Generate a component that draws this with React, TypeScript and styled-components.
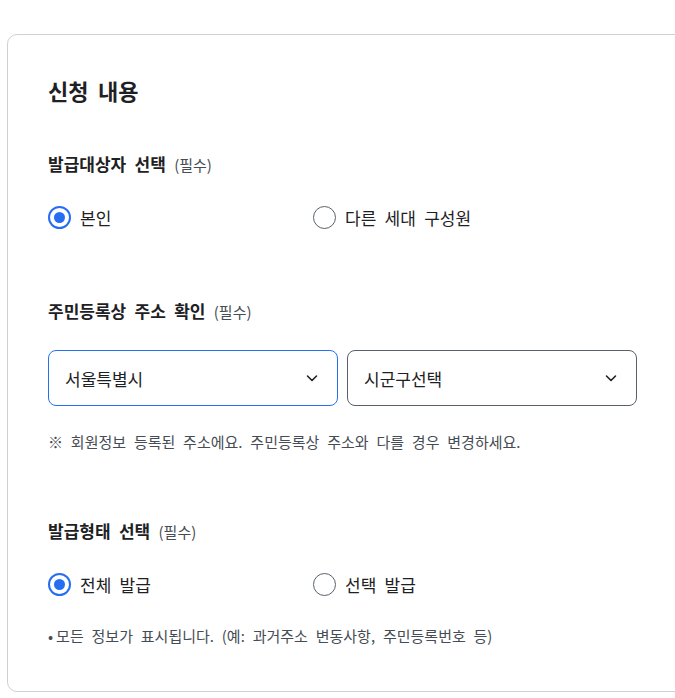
import React, { useState } from "react"
import styled, { createGlobalStyle } from "styled-components"

const GlobalStyle = createGlobalStyle`
  html, body {
    margin: 0;
    padding: 0;
    background: #ffffff;
    overflow: hidden;
  }
  body {
    font-family: "Noto Sans CJK KR", "Noto Sans", sans-serif;
    color: #1e2124;
    word-spacing: 0.28em;
  }
`

const Page = styled.div`
  padding: 34px 0 0 7px;
`

const Card = styled.section`
  width: 720px;
  box-sizing: border-box;
  border: 1px solid #cdd1d5;
  border-radius: 10px;
  padding: 37px 0 43px 40px;
`

const Title = styled.h2`
  margin: 0 0 44px 0;
  font-size: 22px;
  line-height: 36px;
  font-weight: 700;
  color: #1e2124;
`

const Field = styled.div<{ $gap?: number }>`
  margin-bottom: ${({ $gap }) => ($gap ? $gap + "px" : "0")};
`

const Label = styled.div`
  font-size: 17px;
  line-height: 24px;
  font-weight: 700;
  color: #1e2124;
  margin-bottom: 28px;

  span {
    font-size: 15px;
    font-weight: 400;
    color: #464c53;
    word-spacing: 0;
  }
`

const RadioGroup = styled.div`
  display: flex;
`

const RadioItem = styled.label`
  display: flex;
  align-items: center;
  width: 265px;
  height: 24px;
  cursor: pointer;
  font-size: 17px;
  color: #1e2124;
`

const RadioCircle = styled.span<{ $checked: boolean }>`
  box-sizing: border-box;
  width: 23px;
  height: 23px;
  border-radius: 50%;
  border: ${({ $checked }) => ($checked ? "2px solid #256ef4" : "1px solid #58616a")};
  display: flex;
  align-items: center;
  justify-content: center;
  margin-right: 9px;
  background: #fff;

  &::after {
    content: "";
    width: 11px;
    height: 11px;
    border-radius: 50%;
    background: ${({ $checked }) => ($checked ? "#256ef4" : "transparent")};
  }
`

const SelectRow = styled.div`
  display: flex;
  gap: 9px;
  margin-top: -2px;
`

const SelectBox = styled.div<{ $focused?: boolean }>`
  box-sizing: border-box;
  width: 290px;
  height: 56px;
  border: 1px solid ${({ $focused }) => ($focused ? "#256ef4" : "#58616a")};
  border-radius: 8px;
  display: flex;
  align-items: center;
  justify-content: space-between;
  padding: 0 18px 0 16px;
  font-size: 17px;
  color: #1e2124;
  background: #fff;
`

const Chevron = () => (
  <svg width="14" height="14" viewBox="0 0 14 14" fill="none">
    <path d="M2.5 5 L7 9.5 L11.5 5" stroke="#1e2124" strokeWidth="1.6" strokeLinecap="round" strokeLinejoin="round" />
  </svg>
)

const Help = styled.p<{ $top: number }>`
  margin: ${({ $top }) => $top}px 0 0 0;
  font-size: 15px;
  line-height: 24px;
  color: #464c53;
`

const Bullet = styled.span`
  margin-right: 3px;
`

type Option = { id: string; label: string }

function Radios({ name, options }: { name: string; options: Option[] }) {
  const [value, setValue] = useState(options[0].id)
  return (
    <RadioGroup role="radiogroup" aria-label={name}>
      {options.map(o => (
        <RadioItem key={o.id} onClick={() => setValue(o.id)}>
          <RadioCircle $checked={value === o.id} />
          {o.label}
        </RadioItem>
      ))}
    </RadioGroup>
  )
}

export default function App() {
  return (
    <>
      <GlobalStyle />
      <Page>
        <Card>
          <Title>신청 내용</Title>

          <Field $gap={70}>
            <Label>
              발급대상자 선택 <span>(필수)</span>
            </Label>
            <Radios
              name="target"
              options={[
                { id: "self", label: "본인" },
                { id: "other", label: "다른 세대 구성원" },
              ]}
            />
          </Field>

          <Field $gap={65}>
            <Label>
              주민등록상 주소 확인 <span>(필수)</span>
            </Label>
            <SelectRow>
              <SelectBox $focused>
                서울특별시
                <Chevron />
              </SelectBox>
              <SelectBox>
                시군구선택
                <Chevron />
              </SelectBox>
            </SelectRow>
            <Help $top={24}>※ 회원정보 등록된 주소에요. 주민등록상 주소와 다를 경우 변경하세요.</Help>
          </Field>

          <Field>
            <Label>
              발급형태 선택 <span>(필수)</span>
            </Label>
            <Radios
              name="type"
              options={[
                { id: "all", label: "전체 발급" },
                { id: "part", label: "선택 발급" },
              ]}
            />
            <Help $top={28}>
              <Bullet>•</Bullet>모든 정보가 표시됩니다. (예: 과거주소 변동사항, 주민등록번호 등)
            </Help>
          </Field>
        </Card>
      </Page>
    </>
  )
}
